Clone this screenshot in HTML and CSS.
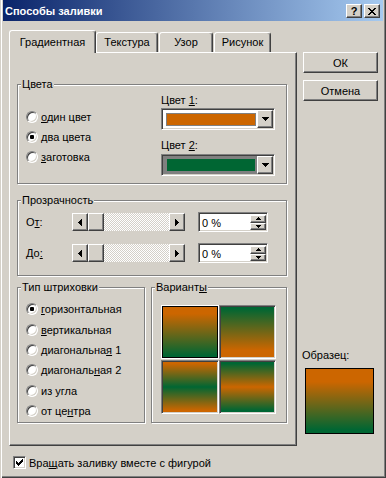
FILE: index.html
```html
<!DOCTYPE html>
<html lang="ru">
<head>
    <meta charset="UTF-8">
    <title>Способы заливки</title>
    <link rel="stylesheet" href="styles.css">
</head>
<body>
    <div class="window">
        <div class="titlebar">
            <span class="title">Способы заливки</span>
            <span class="tbtn help">?</span>
            <span class="tbtn"><svg width="8" height="7" viewBox="0 0 8 7"><path d="M0 0h2v1H0zM6 0h2v1H6zM1 1h2v1H1zM5 1h2v1H5zM2 2h4v1H2zM3 3h2v1H3zM2 4h4v1H2zM1 5h2v1H1zM5 5h2v1H5zM0 6h2v1H0zM6 6h2v1H6z"/></svg></span>
        </div>

        <div class="client">
            <div class="main">
                <div class="left">
                    <div class="tabs">
                        <div class="tab active">Градиентная</div>
                        <div class="tab t2">Текстура</div>
                        <div class="tab t3">Узор</div>
                        <div class="tab t4">Рисунок</div>
                    </div>

                    <div class="panel">
                        <div class="group colors">
                            <div class="legend">Цвета</div>
                            <div class="colors-body">
                                <div class="radios">
                                    <div class="row"><span class="radio"></span><span><u>о</u>дин цвет</span></div>
                                    <div class="row"><span class="radio on"></span><span><u>д</u>ва цвета</span></div>
                                    <div class="row"><span class="radio"></span><span><u>з</u>аготовка</span></div>
                                </div>
                                <div class="combos">
                                    <div class="clabel">Цвет <u>1</u>:</div>
                                    <div class="combo">
                                        <div class="value"><span class="swatch orange"></span></div>
                                        <span class="drop"><svg width="7" height="4" viewBox="0 0 7 4"><path d="M0 0h7v1H0zM1 1h5v1H1zM2 2h3v1H2zM3 3h1v1H3z"/></svg></span>
                                    </div>
                                    <div class="clabel second">Цвет <u>2</u>:</div>
                                    <div class="combo">
                                        <div class="value focused"><span class="swatch green"></span></div>
                                        <span class="drop"><svg width="7" height="4" viewBox="0 0 7 4"><path d="M0 0h7v1H0zM1 1h5v1H1zM2 2h3v1H2zM3 3h1v1H3z"/></svg></span>
                                    </div>
                                </div>
                            </div>
                        </div>

                        <div class="group trans">
                            <div class="legend">Прозрачность</div>
                            <div class="trows">
                                <div class="trow">
                                    <span class="tlabel">О<u>т</u>:</span>
                                    <div class="scroll">
                                        <span class="sbtn"><svg width="4" height="7" viewBox="0 0 4 7"><path d="M3 0h1v7H3zM2 1h1v5H2zM1 2h1v3H1zM0 3h1v1H0z"/></svg></span>
                                        <span class="sbtn thumb"></span>
                                        <span class="track"></span>
                                        <span class="sbtn"><svg width="4" height="7" viewBox="0 0 4 7"><path d="M0 0h1v7H0zM1 1h1v5H1zM2 2h1v3H2zM3 3h1v1H3z"/></svg></span>
                                    </div>
                                    <div class="spin">
                                        <span class="spin-text">0 %</span>
                                        <div class="spin-btns">
                                            <span class="spbtn"><svg width="5" height="3" viewBox="0 0 5 3"><path d="M2 0h1v1H2zM1 1h3v1H1zM0 2h5v1H0z"/></svg></span>
                                            <span class="spbtn"><svg width="5" height="3" viewBox="0 0 5 3"><path d="M0 0h5v1H0zM1 1h3v1H1zM2 2h1v1H2z"/></svg></span>
                                        </div>
                                    </div>
                                </div>
                                <div class="trow">
                                    <span class="tlabel">До<u>:</u></span>
                                    <div class="scroll">
                                        <span class="sbtn"><svg width="4" height="7" viewBox="0 0 4 7"><path d="M3 0h1v7H3zM2 1h1v5H2zM1 2h1v3H1zM0 3h1v1H0z"/></svg></span>
                                        <span class="sbtn thumb"></span>
                                        <span class="track"></span>
                                        <span class="sbtn"><svg width="4" height="7" viewBox="0 0 4 7"><path d="M0 0h1v7H0zM1 1h1v5H1zM2 2h1v3H2zM3 3h1v1H3z"/></svg></span>
                                    </div>
                                    <div class="spin">
                                        <span class="spin-text">0 %</span>
                                        <div class="spin-btns">
                                            <span class="spbtn"><svg width="5" height="3" viewBox="0 0 5 3"><path d="M2 0h1v1H2zM1 1h3v1H1zM0 2h5v1H0z"/></svg></span>
                                            <span class="spbtn"><svg width="5" height="3" viewBox="0 0 5 3"><path d="M0 0h5v1H0zM1 1h3v1H1zM2 2h1v1H2z"/></svg></span>
                                        </div>
                                    </div>
                                </div>
                            </div>
                        </div>

                        <div class="bottom">
                            <div class="group type">
                                <div class="legend">Тип штриховки</div>
                                <div class="radios">
                                    <div class="row"><span class="radio on"></span><span><u>г</u>оризонтальная</span></div>
                                    <div class="row"><span class="radio"></span><span><u>в</u>ертикальная</span></div>
                                    <div class="row"><span class="radio"></span><span>диагональна<u>я</u> 1</span></div>
                                    <div class="row"><span class="radio"></span><span>диагональ<u>н</u>ая 2</span></div>
                                    <div class="row"><span class="radio"></span><span>из угла</span></div>
                                    <div class="row"><span class="radio"></span><span>от це<u>н</u>тра</span></div>
                                </div>
                            </div>
                            <div class="group variants">
                                <div class="legend">Вариант<u>ы</u></div>
                                <div class="grid">
                                    <span class="tile selected g1"></span>
                                    <span class="tile g2"></span>
                                    <span class="tile g3"></span>
                                    <span class="tile g4"></span>
                                </div>
                            </div>
                        </div>
                    </div>
                </div>

                <div class="right">
                    <div class="btn">ОК</div>
                    <div class="btn">Отмена</div>
                    <div class="sample-label">Образец:</div>
                    <div class="sample"></div>
                </div>
            </div>

            <div class="rotate">
                <span class="check"><svg width="7" height="7" viewBox="0 0 7 7"><path d="M6 0h1v1H6zM5 1h2v1H5zM0 2h1v1H0zM4 2h3v1H4zM0 3h2v1H0zM3 3h3v1H3zM0 4h5v1H0zM1 5h3v1H1zM2 6h1v1H2z"/></svg></span>
                <span>Вра<u>щ</u>ать заливку вместе с фигурой</span>
            </div>
        </div>
    </div>
</body>
</html>
```

FILE: styles.css
```css
:root {
    --face: #d4d0c8;
    --shadow: #808080;
    --dark: #404040;
    --orange: #cc6600;
    --green: #006633;
}

* {
    box-sizing: border-box;
}

body {
    margin: 0;
    background: var(--face);
    font-family: "Liberation Sans", Arial, sans-serif;
    font-size: 11px;
    color: #000;
}

u {
    text-decoration-thickness: 1px;
    text-underline-offset: 1px;
}

svg {
    display: block;
    fill: #000;
}

.window {
    width: 386px;
    height: 478px;
    padding: 0 3px 3px;
    background: var(--face);
    box-shadow: inset 1px 0 var(--face), inset 2px 0 #fff, inset -1px -1px var(--dark), inset -2px -2px var(--shadow);
    display: flex;
    flex-direction: column;
}

/* title bar */
.titlebar {
    height: 21px;
    flex: none;
    display: flex;
    align-items: flex-start;
    padding: 4px 3px 0 2px;
    background: linear-gradient(to right, #0a246a, #a6caf0);
}

.title {
    flex: 1;
    color: #fff;
    font-weight: bold;
    line-height: 14px;
}

.tbtn {
    width: 16px;
    height: 14px;
    display: flex;
    align-items: center;
    justify-content: center;
    background: var(--face);
    border: 1px solid;
    border-color: #fff var(--dark) var(--dark) #fff;
    box-shadow: inset -1px -1px var(--shadow);
}

.tbtn + .tbtn {
    margin-left: 2px;
}

.help {
    font-weight: bold;
    font-size: 11px;
    line-height: 12px;
}

/* dialog body */
.client {
    flex: 1;
    padding: 9px 0 0 6px;
}

.main {
    display: flex;
}

.left {
    width: 288px;
}

.tabs {
    display: flex;
    align-items: flex-end;
    height: 22px;
}

.tab {
    height: 20px;
    border: 1px solid;
    border-color: #fff var(--dark) transparent #fff;
    border-bottom: none;
    border-radius: 3px 3px 0 0;
    box-shadow: inset -1px 0 var(--shadow);
    display: flex;
    align-items: center;
    justify-content: center;
    line-height: 13px;
}

.tab.active {
    width: 87px;
    height: 23px;
    margin-bottom: -1px;
    position: relative;
    z-index: 1;
    background: var(--face);
}

.t2 { width: 62px; margin-right: 1px; }
.t3 { width: 54px; margin-right: 1px; }
.t4 { width: 57px; }

.panel {
    height: 394px;
    border: 1px solid;
    border-color: #fff var(--dark) var(--dark) #fff;
    box-shadow: inset -1px -1px var(--shadow);
    padding: 31px 0 0 7px;
}

/* group boxes */
.group {
    border: 1px solid var(--shadow);
    box-shadow: 1px 1px 0 #fff, inset 1px 1px 0 #fff;
}

.legend {
    width: max-content;
    margin: -7px 0 0 3px;
    padding: 0 1px;
    background: var(--face);
    line-height: 13px;
}

.colors {
    width: 270px;
    height: 100px;
}

.colors-body {
    display: flex;
}

.colors .radios {
    width: 143px;
    padding: 16px 0 0 8px;
}

.row {
    display: flex;
    align-items: center;
    height: 20px;
}

.radio {
    width: 12px;
    height: 12px;
    flex: none;
    margin-right: 3px;
    border-radius: 50%;
    background: #fff;
    border: 1px solid;
    border-color: var(--shadow) #fff #fff var(--shadow);
    box-shadow: inset 1px 1px var(--dark), inset -1px -1px var(--face);
    display: flex;
    align-items: center;
    justify-content: center;
}

.radio.on::after {
    content: "";
    width: 4px;
    height: 4px;
    border-radius: 1px;
    background: #000;
}

.combos {
    width: 114px;
    padding-top: 3px;
}

.clabel {
    line-height: 13px;
}

.clabel.second {
    margin-top: 9px;
}

.combo {
    height: 22px;
    margin-top: 1px;
    display: flex;
    background: #fff;
    border: 1px solid;
    border-color: var(--shadow) #fff #fff var(--shadow);
    box-shadow: inset 1px 1px var(--dark), inset -1px -1px var(--face);
    padding: 1px;
}

.clabel.second + .combo {
    margin-top: 2px;
}

.combo .value {
    flex: 1;
    display: flex;
    padding: 3px 1px 2px 3px;
}

.combo .value.focused {
    background: var(--shadow);
    padding: 3px 2px 3px 4px;
}

.swatch {
    flex: 1;
    border: 1px solid var(--shadow);
}

.swatch.orange { background: var(--orange); }
.swatch.green { background: var(--green); border: none; }

.drop,
.sbtn,
.spbtn,
.btn {
    background: var(--face);
    border: 1px solid;
    border-color: #fff var(--dark) var(--dark) #fff;
    box-shadow: inset -1px -1px var(--shadow);
    display: flex;
    align-items: center;
    justify-content: center;
}

.drop {
    width: 16px;
}

/* transparency */
.trans {
    width: 270px;
    height: 76px;
    margin-top: 16px;
}

.trows {
    padding: 5px 0 0 8px;
}

.trow {
    display: flex;
    align-items: center;
    height: 20px;
}

.trow + .trow {
    margin-top: 11px;
}

.tlabel {
    width: 46px;
}

.scroll {
    width: 113px;
    height: 18px;
    display: flex;
}

.sbtn {
    width: 16px;
}

.track {
    flex: 1;
    background: repeating-conic-gradient(#fff 0 25%, var(--face) 0 50%) 0 0 / 2px 2px;
}

.spin {
    width: 70px;
    height: 20px;
    margin-left: 13px;
    display: flex;
    background: #fff;
    border: 1px solid;
    border-color: var(--shadow) #fff #fff var(--shadow);
    box-shadow: inset 1px 1px var(--dark), inset -1px -1px var(--face);
    padding: 2px 1px 1px 2px;
}

.spin-text {
    flex: 1;
    line-height: 16px;
    padding-left: 1px;
}

.spin-btns {
    width: 16px;
    display: flex;
    flex-direction: column;
}

.spbtn {
    flex: 1;
}

/* bottom groups */
.bottom {
    display: flex;
    gap: 6px;
    margin-top: 11px;
}

.type {
    width: 128px;
    height: 136px;
}

.type .radios {
    padding: 5px 0 0 8px;
}

.type .row {
    height: 20.4px;
}

.variants {
    width: 136px;
    height: 136px;
}

.grid {
    display: grid;
    grid-template-columns: 58px 57px;
    grid-template-rows: 54px 54px;
    row-gap: 1px;
    margin: 11px 0 0 9px;
}

.tile {
    border: 1px solid;
    border-color: var(--shadow) #fff #fff var(--shadow);
    box-shadow: inset 1px 1px var(--dark), inset -1px -1px var(--face);
    background-clip: content-box;
}

.tile.selected {
    border-color: #fff;
    box-shadow: inset 0 0 0 1px #000;
}

.g1 { background-image: linear-gradient(var(--orange) 15%, var(--green) 95%); }
.g2 { background-image: linear-gradient(var(--green) 5%, var(--orange) 85%); }
.g3 { background-image: linear-gradient(var(--orange) 5%, var(--green) 50%, var(--orange) 95%); }
.g4 { background-image: linear-gradient(var(--green) 5%, var(--orange) 50%, var(--green) 95%); }

/* right column */
.right {
    width: 75px;
    margin-left: 6px;
    padding-top: 22px;
}

.btn {
    height: 21px;
}

.btn + .btn {
    margin-top: 7px;
}

.sample-label {
    margin: 248px 0 0 -1px;
    line-height: 13px;
}

.sample {
    width: 69px;
    height: 66px;
    margin: 6px 0 0 2px;
    border: 1px solid #000;
    background: linear-gradient(var(--orange) 20%, var(--green) 95%);
}

/* checkbox row */
.rotate {
    display: flex;
    align-items: center;
    margin: 10px 0 0 4px;
}

.check {
    width: 13px;
    height: 13px;
    margin-right: 3px;
    background: #fff;
    border: 1px solid;
    border-color: var(--shadow) #fff #fff var(--shadow);
    box-shadow: inset 1px 1px var(--dark), inset -1px -1px var(--face);
    display: flex;
    align-items: center;
    justify-content: center;
}
```
